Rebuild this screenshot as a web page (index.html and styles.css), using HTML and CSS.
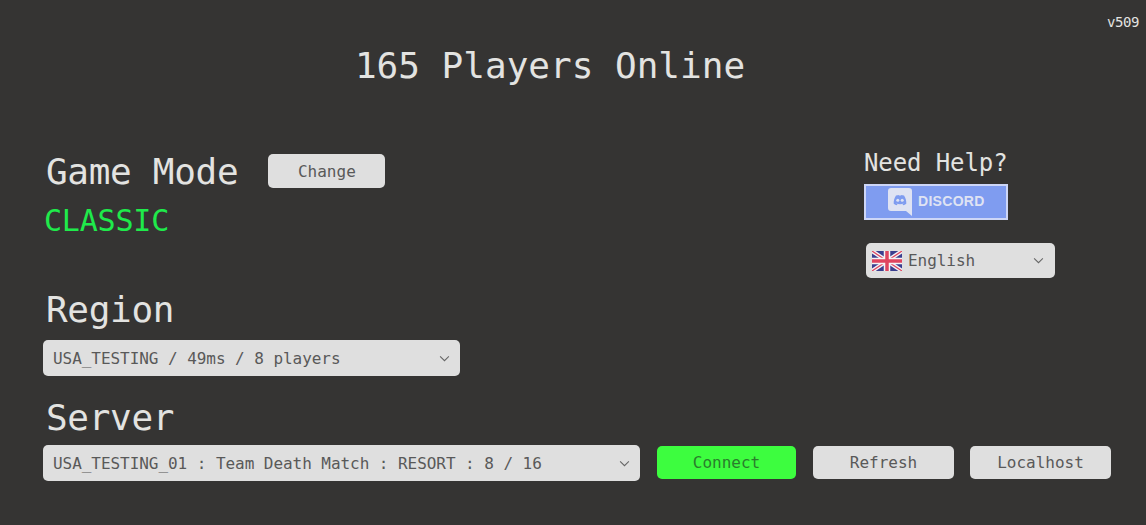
FILE: index.html
```html
<!DOCTYPE html>
<html lang="en">
<head>
  <meta charset="UTF-8" />
  <title>Players Online</title>
  <link rel="stylesheet" href="styles.css">
</head>
<body>
  <div class="version">v509</div>
  <h1 class="title">165 Players Online</h1>

  <div class="top">
    <div class="left-col">
      <div class="mode-row">
        <h2 class="heading">Game Mode</h2>
        <button class="btn btn-change">Change</button>
      </div>
      <div class="mode-name">CLASSIC</div>
      <h2 class="heading region-heading">Region</h2>
      <div class="select region-select">
        <span>USA_TESTING / 49ms / 8 players</span>
        <svg class="chevron" viewBox="0 0 12 8"><path d="M1 1.500 6 6.500 11 1.500" /></svg>
      </div>
    </div>

    <div class="help-col">
      <div class="help-title">Need Help?</div>
      <div class="discord">
        <svg class="discord-icon" viewBox="0 0 24 28">
          <path class="bubble" d="M3 0H21A3 3 0 0 1 24 3V28L18 23H3A3 3 0 0 1 0 20V3A3 3 0 0 1 3 0Z" />
          <path class="face" d="M8 7.500C9 7.100 10 6.900 10.600 6.900L11 7.600C11.700 7.500 12.300 7.500 13 7.600L13.400 6.900C14 6.900 15 7.100 16 7.500 17.700 10 18.500 13 18.300 15.800 17.300 16.600 16.200 17 15.200 17.200L14.500 16.100C15 15.900 15.400 15.700 15.800 15.400 13.600 16.400 10.400 16.400 8.200 15.400 8.600 15.700 9 15.900 9.500 16.100L8.800 17.200C7.800 17 6.700 16.600 5.700 15.800 5.500 13 6.300 10 8 7.500Z" />
          <circle class="eye" cx="9.800" cy="12.300" r="1.500" />
          <circle class="eye" cx="14.200" cy="12.300" r="1.500" />
        </svg>
        <span class="discord-text">DISCORD</span>
      </div>
      <div class="select lang-select">
        <svg class="flag" viewBox="0 0 60 40">
          <rect width="60" height="40" fill="#3b3f8f" />
          <path d="M0 0 60 40M60 0 0 40" stroke="#f4f4f6" stroke-width="8" />
          <path d="M0 0 60 40M60 0 0 40" stroke="#e0455f" stroke-width="2.500" />
          <path d="M30 0V40M0 20H60" stroke="#f4f4f6" stroke-width="13" />
          <path d="M30 0V40M0 20H60" stroke="#e0455f" stroke-width="7" />
        </svg>
        <span class="lang-name">English</span>
        <svg class="chevron" viewBox="0 0 12 8"><path d="M1 1.500 6 6.500 11 1.500" /></svg>
      </div>
    </div>
  </div>

  <h2 class="heading server-heading">Server</h2>
  <div class="server-row">
    <div class="select server-select">
      <span>USA_TESTING_01 : Team Death Match : RESORT : 8 / 16</span>
      <svg class="chevron" viewBox="0 0 12 8"><path d="M1 1.500 6 6.500 11 1.500" /></svg>
    </div>
    <button class="btn btn-connect">Connect</button>
    <button class="btn btn-refresh">Refresh</button>
    <button class="btn btn-local">Localhost</button>
  </div>
</body>
</html>
```

FILE: styles.css
```css
html, body {
  margin: 0;
  height: 100%;
  overflow: hidden;
}

body {
  background: #353433;
  color: #e3e3e1;
  font-family: "DejaVu Sans Mono", "Liberation Mono", monospace;
}

.version {
  padding: 12px 7px 0 0;
  font-size: 14px;
  letter-spacing: -0.4px;
  line-height: 20px;
  text-align: right;
}

.title {
  width: 1100px;
  margin: 10px 0 0;
  font-size: 36px;
  font-weight: 400;
  line-height: 48px;
  text-align: center;
}

.top {
  display: flex;
  gap: 404px;
  margin-top: 57px;
  padding-left: 43px;
}

.left-col {
  width: 417px;
  padding-top: 2px;
}

.mode-row {
  display: flex;
  align-items: center;
  gap: 30px;
}

.heading {
  margin: 0 0 0 3px;
  font-size: 36px;
  font-weight: 400;
  letter-spacing: -0.3px;
  line-height: 44px;
}

.mode-row .heading {
  padding-top: 1px;
}

.mode-name {
  margin: 7px 0 0 1px;
  color: #1fea4b;
  font-size: 30px;
  letter-spacing: -0.2px;
  line-height: 40px;
}

.region-heading {
  margin-top: 47px;
}

.select {
  display: flex;
  align-items: center;
  height: 36px;
  box-sizing: border-box;
  padding: 0 10px;
  background: #dfdfdf;
  border-radius: 5px;
  color: #595959;
  font-size: 16px;
  letter-spacing: -0.05px;
  white-space: pre;
}

.region-select {
  margin-top: 8px;
}

.chevron {
  width: 11px;
  height: 7px;
  margin-left: auto;
  fill: none;
  stroke: #666;
  stroke-width: 1.2;
}

.help-col {
  width: 192px;
}

.help-title {
  font-size: 24px;
  letter-spacing: -0.1px;
  line-height: 32px;
}

.discord {
  display: flex;
  align-items: center;
  gap: 6px;
  width: 144px;
  height: 36px;
  box-sizing: border-box;
  margin-top: 5px;
  padding-left: 22px;
  background: #7f9cf0;
  border: 2px solid #cdd6f7;
}

.discord-icon {
  width: 24px;
  height: 28px;
}

.bubble { fill: #dfe3f3; }
.face { fill: #7f9cf0; }
.eye { fill: #dfe3f3; }

.discord-text {
  margin-top: -2px;
  color: #dfe3f3;
  font-family: "Liberation Sans", sans-serif;
  font-size: 14px;
  font-weight: 700;
  letter-spacing: 0.3px;
}

.lang-select {
  width: 189px;
  height: 35px;
  margin: 23px 0 0 2px;
  padding: 0 11px 0 6px;
}

.flag {
  width: 30px;
  height: 20px;
  margin-right: 6px;
}

.server-heading {
  margin: 20px 0 0 46px;
}

.server-row {
  display: flex;
  align-items: flex-start;
  margin-top: 5px;
  padding-left: 43px;
}

.server-select {
  width: 597px;
}

.btn {
  height: 33px;
  padding: 0;
  background: #dfdfdf;
  border: 0;
  border-radius: 5px;
  color: #595959;
  font-family: inherit;
  font-size: 16px;
}

.btn-change {
  flex: none;
  width: 117px;
  height: 34px;
  margin-bottom: 1px;
}

.btn-connect {
  width: 139px;
  margin: 1px 0 0 17px;
  background: #3dfd3f;
  color: #2a7d2c;
}

.btn-refresh {
  width: 141px;
  margin: 1px 0 0 17px;
}

.btn-local {
  width: 141px;
  margin: 1px 0 0 16px;
}
```
